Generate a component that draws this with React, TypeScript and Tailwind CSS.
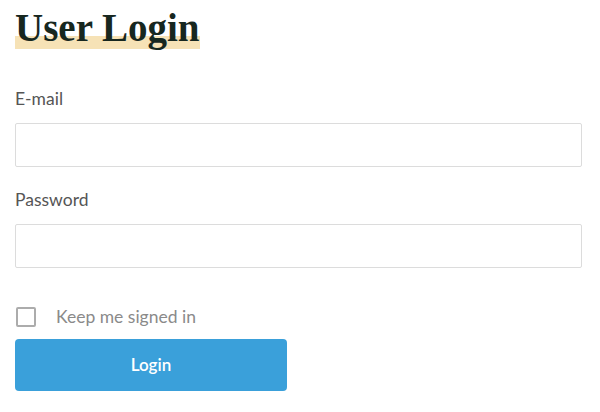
import React, { useState } from 'react'

export default function App() {
  const [email, setEmail] = useState('')
  const [password, setPassword] = useState('')
  const [remember, setRemember] = useState(false)

  return (
    <div className="min-h-screen bg-white px-[15px] pt-[4px] font-['Lato',sans-serif] text-[#555]">
      <h1 className="relative inline-block font-['Liberation_Serif',serif] text-[39px] font-bold leading-[48px] text-[#17271f]">
        <span className="absolute bottom-[3px] left-0 right-0 h-[13px] bg-[#f6e2b6]" />
        <span className="relative">User Login</span>
      </h1>

      <form className="mt-[35px] flex flex-col" onSubmit={e => e.preventDefault()}>
        <label className="text-[17.5px] leading-[24px]">E-mail</label>
        <input
          type="email"
          value={email}
          onChange={e => setEmail(e.target.value)}
          className="mt-[12px] h-[44px] w-[567px] rounded-[2px] border border-[#dcdcdc] px-3 outline-none"
        />

        <label className="mt-[21px] text-[17.5px] leading-[24px]">Password</label>
        <input
          type="password"
          value={password}
          onChange={e => setPassword(e.target.value)}
          className="mt-[12px] h-[44px] w-[567px] rounded-[2px] border border-[#dcdcdc] px-3 outline-none"
        />

        <label className="mt-[37px] flex cursor-pointer items-center gap-[20px]">
          <span
            onClick={() => setRemember(!remember)}
            className="ml-[1px] flex h-[20px] w-[20px] items-center justify-center rounded-[2px] border-2 border-[#acacac]"
          >
            {remember && <span className="h-[10px] w-[10px] bg-[#3a9fd9]" />}
          </span>
          <span className="text-[17.5px] leading-[24px] text-[#8a8a8a]">Keep me signed in</span>
        </label>

        <button
          type="submit"
          className="mt-[10px] h-[52px] w-[272px] rounded-[4px] bg-[#3aa0da] text-[17px] font-semibold text-white"
        >
          Login
        </button>
      </form>
    </div>
  )
}
